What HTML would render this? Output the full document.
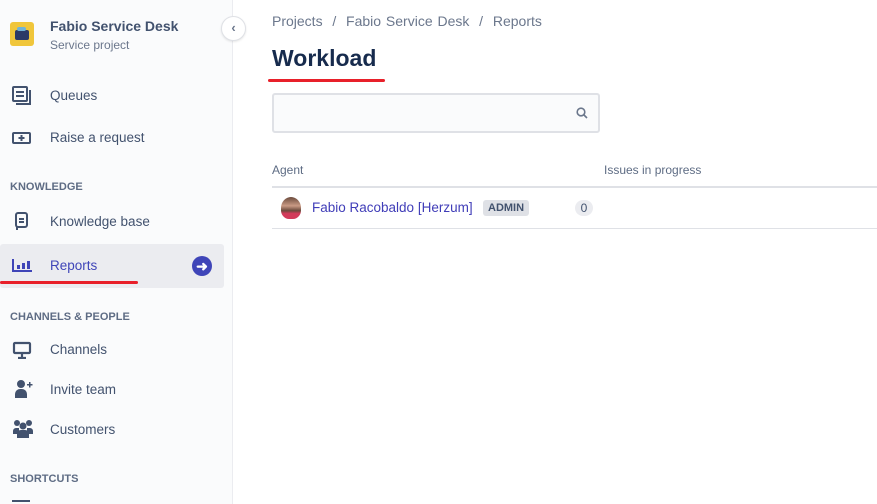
<!DOCTYPE html>
<html><head><meta charset="utf-8"><style>
*{box-sizing:border-box;margin:0;padding:0}
body{width:877px;height:504px;overflow:hidden;background:#fff;font-family:"Liberation Sans",sans-serif;color:#172b4d;position:relative}
.side{position:absolute;left:0;top:0;width:233px;height:504px;background:#fafbfc;border-right:1px solid #ebecf0}
.t{position:absolute;font-size:13.5px;color:#42526e}
.h{position:absolute;left:10px;font-size:11px;font-weight:bold;color:#5e6c84}
.ic{position:absolute;left:12px}
.red{position:absolute;height:3px;background:#e8202a;border-radius:2px}
</style></head><body>
<div class="side">
  <div style="position:absolute;left:10px;top:22px;width:24px;height:24px;background:#f0c63b;border-radius:3px"><div style="position:absolute;left:5px;top:8px;width:14px;height:10px;background:#2b3a67;border-radius:2px"></div><div style="position:absolute;left:7px;top:5px;width:9px;height:4px;background:#6fb3d8;border-radius:2px"></div></div>
  <div style="position:absolute;left:50px;top:18px;font-size:14px;font-weight:bold;color:#42526e">Fabio Service Desk</div>
  <div style="position:absolute;left:50px;top:38px;font-size:12px;color:#6b778c">Service project</div>

  <svg class="ic" style="top:86px" width="20" height="20" viewBox="0 0 20 20" fill="none" stroke="#42526e" stroke-width="2"><rect x="1" y="1" width="14" height="14" rx="1"/><path d="M4 6h8M4 10h8M18 4v14H4"/></svg>
  <div class="t" style="left:50px;top:88px">Queues</div>
  <svg class="ic" style="top:130px" width="20" height="16" viewBox="0 0 20 16" fill="none" stroke="#42526e" stroke-width="2"><rect x="1" y="3" width="17" height="10" rx="1"/><path d="M9.5 5v6M6.5 8h6"/></svg>
  <div class="t" style="left:50px;top:130px">Raise a request</div>

  <div class="h" style="top:181px">KNOWLEDGE</div>
  <svg class="ic" style="top:212px;left:14px" width="16" height="20" viewBox="0 0 16 20" fill="none" stroke="#42526e" stroke-width="2"><rect x="2" y="1" width="11" height="14" rx="2"/><path d="M5 7h5M5 10h5M3 15v3"/></svg>
  <div class="t" style="left:50px;top:214px">Knowledge base</div>

  <div style="position:absolute;left:0;top:244px;width:224px;height:44px;background:#ebecf0;border-radius:3px"></div>
  <svg class="ic" style="top:258px" width="20" height="16" viewBox="0 0 20 16" fill="#3f45b8"><rect x="0" y="1" width="2" height="13"/><rect x="0" y="12" width="20" height="2"/><rect x="5" y="7" width="3" height="4"/><rect x="10" y="5" width="3" height="6"/><rect x="15" y="3" width="3" height="8"/></svg>
  <div class="t" style="left:50px;top:258px;color:#3f45b8">Reports</div>
  <div style="position:absolute;left:192px;top:256px;width:20px;height:20px;border-radius:50%;background:#3f45b8;color:#fff;font-size:14px;font-weight:bold;text-align:center;line-height:20px">&#10140;</div>
  <div class="red" style="left:0;top:281px;width:138px"></div>

  <div class="h" style="top:311px">CHANNELS &amp; PEOPLE</div>
  <svg class="ic" style="top:341px" width="20" height="18" viewBox="0 0 20 18" fill="none" stroke="#42526e" stroke-width="2.2"><rect x="2" y="2" width="16" height="10" rx="1"/><path d="M10 12v4M6 17h8"/></svg>
  <div class="t" style="left:50px;top:342px">Channels</div>
  <svg class="ic" style="top:379px;left:14px" width="20" height="20" viewBox="0 0 20 20" fill="#42526e"><circle cx="7" cy="5" r="4"/><path d="M1 19v-4a5 5 0 0 1 5-5h2a5 5 0 0 1 5 5v4z"/><path d="M15 3h1.5v2h2v1.5h-2v2H15v-2h-2V5h2z"/></svg>
  <div class="t" style="left:50px;top:382px">Invite team</div>
  <svg class="ic" style="top:419px" width="22" height="20" viewBox="0 0 22 20" fill="#42526e"><circle cx="5" cy="4" r="3"/><circle cx="17" cy="4" r="3"/><circle cx="11" cy="7" r="3.5"/><path d="M1 15v-3a3 3 0 0 1 3-3h3v6zM21 15v-3a3 3 0 0 0-3-3h-3v6z"/><path d="M5 19v-4a4 4 0 0 1 4-4h4a4 4 0 0 1 4 4v4z"/></svg>
  <div class="t" style="left:50px;top:422px">Customers</div>

  <div class="h" style="top:473px">SHORTCUTS</div>
  <div style="position:absolute;left:12px;top:500px;width:18px;height:4px;border-top:2px solid #42526e"></div>
</div>
<div style="position:absolute;left:221px;top:16px;width:25px;height:25px;border-radius:50%;background:#fff;border:1px solid #dfe1e6;box-shadow:0 1px 2px rgba(0,0,0,.1);text-align:center;line-height:22px;font-size:13px;font-weight:bold;color:#6b778c">&#8249;</div>

<div style="position:absolute;left:272px;top:13px;font-size:14px;color:#6b778c;word-spacing:1px">Projects &nbsp;/&nbsp; Fabio Service Desk &nbsp;/&nbsp; Reports</div>
<div style="position:absolute;left:272px;top:45px;font-size:23px;font-weight:bold;color:#172b4d">Workload</div>
<div class="red" style="left:268px;top:79px;width:117px"></div>
<div style="position:absolute;left:272px;top:93px;width:328px;height:40px;background:#fafbfc;border:2px solid #dfe1e6;border-radius:3px"></div>
<svg style="position:absolute;left:576px;top:107px" width="12" height="12" viewBox="0 0 12 12" fill="none" stroke="#6b778c" stroke-width="1.6"><circle cx="5" cy="5" r="3.8"/><path d="M8 8l3 3"/></svg>

<div style="position:absolute;left:272px;top:163px;font-size:12px;color:#5e6c84">Agent</div>
<div style="position:absolute;left:604px;top:163px;font-size:12px;color:#5e6c84">Issues in progress</div>
<div style="position:absolute;left:272px;top:186px;width:605px;height:2px;background:#dfe1e6"></div>
<div style="position:absolute;left:281px;top:197px;width:20px;height:22px;border-radius:50% 50% 40% 40%;background:linear-gradient(#6b4a3c 0,#c99a84 40%,#6b4a3c 62%,#d23b5a 75%)"></div>
<div style="position:absolute;left:312px;top:200px;font-size:13.5px;color:#403db8">Fabio Racobaldo [Herzum]</div>
<div style="position:absolute;left:483px;top:200px;height:16px;padding:0 5px;background:#dfe1e6;border-radius:3px;font-size:11px;font-weight:bold;color:#42526e;line-height:16px">ADMIN</div>
<div style="position:absolute;left:575px;top:200px;width:18px;height:16px;background:#ebecf0;border-radius:8px;font-size:12px;color:#42526e;text-align:center;line-height:16px">0</div>
<div style="position:absolute;left:272px;top:228px;width:605px;height:1px;background:#dfe1e6"></div>
</body></html>
